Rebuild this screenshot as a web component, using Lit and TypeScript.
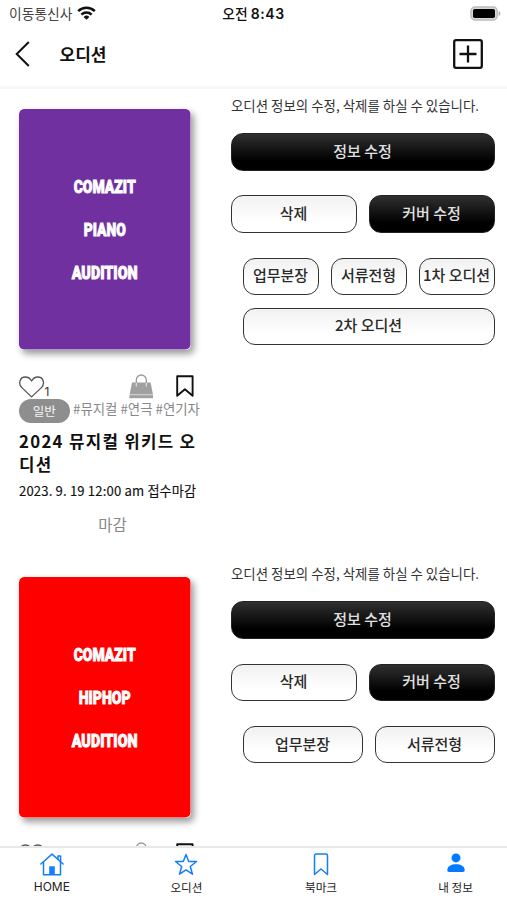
import { LitElement, html, css, svg, nothing } from "lit";
import { customElement, property } from "lit/decorators.js";

@customElement("audition-card")
class AuditionCard extends LitElement {
  @property() genre = "";
  @property() color = "";
  @property({ type: Boolean }) compact = false;
  @property({ attribute: false }) steps: string[][] = [];

  static styles = css`
    :host { display: block; height: 468.3px; }
    .card { display: flex; }
    .left { width: 183px; margin-right: 29px; flex: none; }
    .cover { width: 171.5px; height: 240.5px; border-radius: 5px; box-shadow: 3px 4px 7px rgba(0,0,0,.4); display: block; }
    .cover text { font-family: Roboto, sans-serif; font-weight: 900; font-size: 19.2px; fill: #fff; stroke: #fff; stroke-width: .9px; }
    .icons { display: flex; height: 25px; margin-top: 24.5px; align-items: flex-start; }
    .icons svg { display: block; flex: none; }
    .heart { margin-top: 1.5px; }
    .count { font-family: Inter, sans-serif; font-size: 12px; line-height: 12px; margin-top: 12px; width: 84px; color: #333; }
    .bag { margin-right: 23px; }
    .mark { margin-top: 1px; }
    .tags { display: flex; height: 24px; white-space: nowrap; color: #888; font-size: 13.4px; line-height: 18px; margin-top: 0; }
    .badge { width: 50.5px; height: 24px; border-radius: 12px; background: #8e8e8e; color: #f5f5f5; font-size: 12.5px; line-height: 23px; text-align: center; margin-right: 3.5px; flex: none; }
    .title { font-size: 16.8px; font-weight: 700; line-height: 23px; letter-spacing: 1.3px; margin-top: 6.5px; color: #111; word-break: break-all; }
    .date { font-size: 13.1px; font-weight: 400; line-height: 20px; letter-spacing: .16px; margin-top: 5.5px; white-space: nowrap; color: #111; -webkit-text-stroke: .15px #111; }
    .state { font-size: 15.5px; line-height: 20px; margin-top: 12.5px; width: 187px; text-align: center; color: #888; }
    .right { width: 264px; flex: none; margin-top: -14px; }
    .desc { font-size: 13.45px; line-height: 21px; height: 38px; white-space: nowrap; color: #333; }
    .row { display: flex; gap: 12px; margin-bottom: 24.8px; }
    .steps { display: flex; flex-direction: column; gap: 12.5px; padding-left: 12px; }
    .steps .row { margin: 0; }
    .btn { flex: 1 1 0; min-width: 0; height: 37.5px; box-sizing: border-box; border: 1.5px solid #333; border-radius: 12px; font: inherit; font-size: 15px; font-weight: 500; padding: 0 1px 2px 0; line-height: 34px; text-align: center; white-space: nowrap; color: #2a2a2a; background: linear-gradient(#f1f1f1, #fff 70%); display: flex; align-items: center; justify-content: center; }
    .dark { background: linear-gradient(#303030, #000 75%); border-color: #222; color: #e0e0e0; }
  `;

  render() {
    const line = (t: string, w: number, y: number) => svg`<text x=${85.7 - w / 2} y=${y} textLength=${w} lengthAdjust="spacingAndGlyphs">${t}</text>`;
    return html`<div class="card">
      <div class="left">
        <svg class="cover" viewBox="0 0 171.5 240.5">
          <rect width="171.5" height="240.5" rx="5" fill=${this.color} />
          ${line("COMAZIT", 62, 84.3)}
          ${line(this.genre, this.genre === "PIANO" ? 42 : 52, 127.3)}
          ${line("AUDITION", 66, 170)}
        </svg>
        <div class="icons">
          <svg class="heart" width="25.5" height="22" viewBox="0 0 25.5 22"><path d="M12.6 20.9 2.8 11.6C-.9 8 .5 1 6.4 1c3 0 4.9 1.7 6.2 4 1.3-2.3 3.2-4 6.2-4 5.9 0 7.3 7 3.6 10.6Z" fill="none" stroke="#555" stroke-width="1.3" stroke-linejoin="round"/></svg>
          <span class="count">${this.compact ? nothing : "1"}</span>
          <svg class="bag" width="24.5" height="24.5" viewBox="0 0 24.5 24.5">
            <path d="M7.3 12V6a5 5 0 0 1 10 0v6" fill="none" stroke="#999" stroke-width="1.3"/>
            <path d="M3 8.5h18.6L24 20.4H.6z" fill="#a0a0a0"/>
            <path d="M.4 21.1h23.8v3.1H.4z" fill="#a0a0a0"/>
            <path d="M7.3 9v3.5M17.3 9v3.5" stroke="#e8e8e8" stroke-width="1.1"/>
          </svg>
          <svg class="mark" width="19" height="22" viewBox="0 0 19 22"><path d="M1.2 1.2h15.4v19.6L8.9 14.2l-7.7 6.6z" fill="none" stroke="#111" stroke-width="1.9" stroke-linejoin="round"/></svg>
        </div>
        ${this.compact ? nothing : html`
        <div class="tags"><span class="badge">일반</span>#뮤지컬 #연극 #연기자</div>
        <div class="title">2024 뮤지컬 위키드 오디션</div>
        <div class="date">2023. 9. 19 12:00 am 접수마감</div>
        <div class="state">마감</div>`}
      </div>
      <div class="right">
        <div class="desc">오디션 정보의 수정, 삭제를 하실 수 있습니다.</div>
        <div class="row"><button class="btn dark">정보 수정</button></div>
        <div class="row"><button class="btn">삭제</button><button class="btn dark">커버 수정</button></div>
        <div class="steps">${this.steps.map((r) => html`<div class="row">${r.map((s) => html`<button class="btn">${s}</button>`)}</div>`)}</div>
      </div>
    </div>`;
  }
}

@customElement("app-root")
class AppRoot extends LitElement {
  static styles = css`
    :host { display: flex; flex-direction: column; width: 507px; height: 900px; overflow: hidden; background: #fff; font-family: "Noto Sans CJK KR", sans-serif; color: #111; }
    svg { display: block; flex: none; }
    .status { height: 27px; flex: none; display: grid; grid-template-columns: 1fr auto 1fr; align-items: center; padding: 0 6px 0 9px; font-size: 13.8px; line-height: 26px; }
    .carrier { display: flex; align-items: center; gap: 5px; color: #444; margin-top: -2px; }
    .time { font-weight: 500; margin-right: 3px; }
    .clock { font-family: Inter, sans-serif; font-weight: 600; font-size: 14px; letter-spacing: .6px; }
    .battery { justify-self: end; }
    .header { height: 59px; flex: none; display: flex; align-items: center; padding: 0 24px 5px 15px; box-sizing: border-box; }
    .name { font-size: 17px; font-weight: 700; margin-left: 29.5px; flex: 1; line-height: 22px; margin-bottom: 1px; }
    .list { flex: 1; min-height: 0; overflow: hidden; border-top: 3px solid #f8f8f8; padding: 20px 0 0 19px; }
    .nav { height: 54px; flex: none; box-sizing: border-box; border-top: 2px solid #e8e8e8; display: grid; grid-template-columns: repeat(4, 134.6px); margin-left: -15.5px; background: #fff; }
    .tab { display: flex; flex-direction: column; align-items: center; padding-top: 5px; font-size: 11.6px; font-weight: 400; line-height: 18px; color: #222; }
    .tab svg { margin-bottom: 2px; }
    .home { font-size: 12px; font-family: Inter, sans-serif; }
  `;

  render() {
    return html`
      <div class="status">
        <div class="carrier">이동통신사
          <svg width="19" height="14" viewBox="0 0 19 14"><g fill="none" stroke="#111" stroke-width="2.5"><path d="M1.2 5.2a12 12 0 0 1 16.6 0"/><path d="M4.4 8.6a7.3 7.3 0 0 1 10.2 0"/></g><path d="M9.5 13.8 6.6 10.9a4.1 4.1 0 0 1 5.8 0z" fill="#111"/></svg>
        </div>
        <div class="time">오전 <span class="clock">8:43</span></div>
        <svg class="battery" width="31" height="15" viewBox="0 0 31 15"><rect x="1" y="1" width="26.2" height="13" rx="4" fill="#d8d8d8" stroke="#bcbcbc" stroke-width="1.5"/><rect x="3" y="3" width="22" height="9" rx="1.8" fill="#000"/><path d="M28.7 5v5c2.2-1 2.2-4 0-5z" fill="#aaa"/></svg>
      </div>
      <div class="header">
        <svg width="15" height="26" viewBox="0 0 15 26"><path d="M13.8 1 1.7 13l12.1 12" fill="none" stroke="#111" stroke-width="2"/></svg>
        <div class="name">오디션</div>
        <svg width="30" height="30" viewBox="0 0 30 30"><rect x="1.2" y="1.2" width="27.6" height="27.6" rx="1.8" fill="none" stroke="#111" stroke-width="2.3"/><path d="M15 6.5v17M6.5 15h17" stroke="#111" stroke-width="2.3"/></svg>
      </div>
      <div class="list">
        <audition-card genre="PIANO" color="#7030a0" .steps=${[["업무분장", "서류전형", "1차 오디션"], ["2차 오디션"]]}></audition-card>
        <audition-card genre="HIPHOP" color="#ff0000" compact .steps=${[["업무분장", "서류전형"]]}></audition-card>
      </div>
      <div class="nav">
        <div class="tab home"><svg width="24" height="23" viewBox="0 0 24 23"><g fill="none" stroke="#147efb" stroke-width="1.5" stroke-linejoin="round" stroke-linecap="round"><path d="M.9 11 12 1.1 23.1 11"/><path d="M3.5 9v12.8h17V9M18 6.2V3h2.6v5.5"/></g><path d="M9.2 13.3h5.6v8.5H9.2z" fill="#147efb"/></svg>HOME</div>
        <div class="tab"><svg width="24" height="23" viewBox="0 0 24 23"><path d="M12 1.5l2.7 7h7.8l-6.2 5 2.2 7.7L12 16.9l-6.5 4.3 2.2-7.7-6.2-5h7.8z" fill="none" stroke="#147efb" stroke-width="1.5" stroke-linejoin="round"/></svg>오디션</div>
        <div class="tab"><svg width="24" height="23" viewBox="0 0 24 23"><path d="M5.5 2.6c0-1 .6-1.6 1.6-1.6h9.8c1 0 1.6.6 1.6 1.6v18.9L12 16l-6.5 5.5z" fill="none" stroke="#147efb" stroke-width="1.5" stroke-linejoin="round"/></svg>북마크</div>
        <div class="tab"><svg width="24" height="23" viewBox="0 0 24 23"><circle cx="12" cy="4.9" r="4.5" fill="#007aff"/><path d="M3.3 17c0-4 4.2-5.8 8.7-5.8s8.7 1.8 8.7 5.8c0 1.3-.6 2-1.8 2H5.1c-1.2 0-1.8-.7-1.8-2z" fill="#007aff"/></svg>내 정보</div>
      </div>`;
  }
}
